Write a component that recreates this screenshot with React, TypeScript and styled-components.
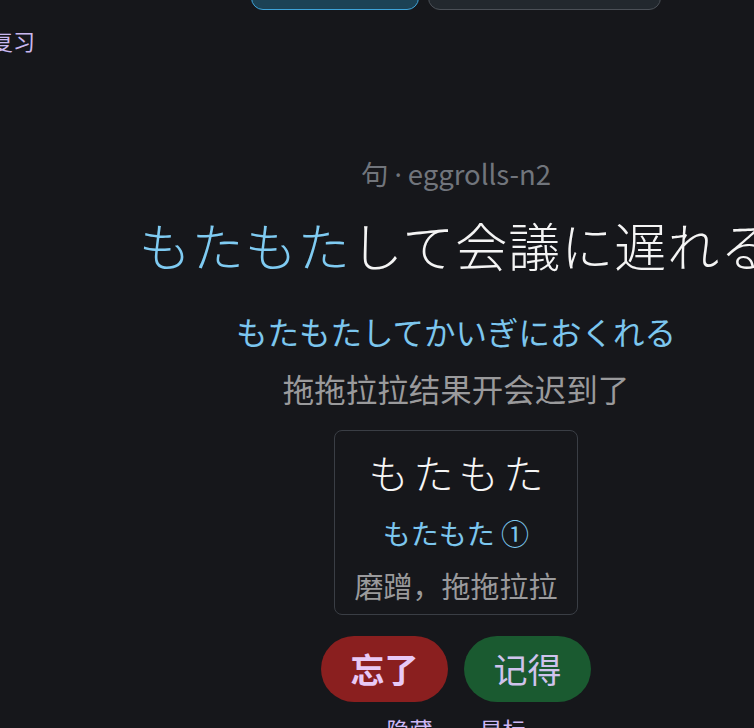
import React from "react";
import styled, { createGlobalStyle } from "styled-components";

const GlobalStyle = createGlobalStyle`
  html, body {
    margin: 0;
    padding: 0;
    background: #16171b;
    overflow: hidden;
  }
  body {
    font-family: "Noto Sans CJK SC", "Noto Sans", sans-serif;
    color: #e8e8ea;
  }
`;

const Page = styled.div`
  width: 930px;
  margin-left: -9px;
  margin-top: -30px;
  display: flex;
  flex-direction: column;
`;

const TabRow = styled.div`
  display: flex;
  justify-content: center;
  gap: 9px;
`;

const Tab = styled.button<{ $active?: boolean; $w: number }>`
  width: ${(p) => p.$w}px;
  height: 40px;
  border-radius: 12px;
  border: 1.5px solid ${(p) => (p.$active ? "#3ea3d8" : "#4b5057")};
  background: ${(p) => (p.$active ? "#1c4255" : "#22282e")};
  padding: 0;
`;

const Title = styled.h1`
  margin: 16px 0 0;
  font-size: 22px;
  line-height: 28px;
  font-weight: 400;
  color: #cab8f0;
`;

const Study = styled.section`
  margin-top: 101px;
  display: flex;
  flex-direction: column;
  align-items: center;
`;

const Meta = styled.div`
  font-size: 27.5px;
  line-height: 36px;
  color: #71757c;
`;

const Dot = styled.span`
  font-family: "Noto Sans", sans-serif;
  margin: 0 6px;
`;

const Sentence = styled.div`
  margin-top: 20px;
  font-family: "Noto Sans CJK JP", sans-serif;
  font-weight: 300;
  font-size: 52px;
  line-height: 64px;
  letter-spacing: 1px;
  white-space: nowrap;
  color: #f4f4f4;
`;

const Target = styled.span`
  color: #7fcbf2;
`;

const Reading = styled.div`
  margin-top: 34px;
  font-family: "Noto Sans CJK JP", sans-serif;
  font-size: 31.5px;
  line-height: 40px;
  color: #7cc6ee;
`;

const Translation = styled.div`
  margin-top: 17px;
  font-size: 31.5px;
  line-height: 40px;
  color: #9a9a9c;
`;

const Card = styled.div`
  margin-top: 22px;
  padding: 17px 19px 11px;
  border: 1px solid #3a3e45;
  border-radius: 8px;
  display: flex;
  flex-direction: column;
  align-items: center;
`;

const Word = styled.div`
  font-family: "Noto Sans CJK JP", sans-serif;
  font-weight: 300;
  font-size: 40px;
  line-height: 48px;
  letter-spacing: 5px;
  margin-right: -5px;
  color: #f6f6f6;
`;

const WordReading = styled.div`
  margin-top: 19px;
  font-family: "Noto Sans CJK JP", sans-serif;
  font-size: 28px;
  line-height: 36px;
  color: #7cc6ee;
`;

const Meaning = styled.div`
  margin-top: 16px;
  font-size: 29px;
  line-height: 36px;
  color: #9a9a9c;
`;

const Actions = styled.div`
  margin-top: 21px;
  display: flex;
  gap: 16px;
`;

const Answer = styled.button<{ $tone: "forgot" | "remember" }>`
  width: 127px;
  height: 66px;
  border: none;
  border-radius: 33px;
  font-family: "Noto Sans CJK SC", sans-serif;
  font-size: 34px;
  line-height: 1;
  cursor: pointer;
  background: ${(p) => (p.$tone === "forgot" ? "#8a1f1f" : "#1a5a30")};
  color: ${(p) => (p.$tone === "forgot" ? "#e8c9f6" : "#cfc3ec")};
  font-weight: ${(p) => (p.$tone === "forgot" ? 700 : 400)};
`;

const Links = styled.div`
  margin-top: 12px;
  display: flex;
  gap: 47px;
`;

const TextLink = styled.a`
  font-size: 23px;
  line-height: 30px;
  color: #cdb8f5;
  text-decoration: none;
  cursor: pointer;
`;

export default function App() {
  return (
    <>
      <GlobalStyle />
      <Page>
        <TabRow>
          <Tab $active $w={168} />
          <Tab $w={233} />
        </TabRow>

        <Title>复习</Title>

        <Study>
          <Meta>
            句<Dot>·</Dot>eggrolls-n2
          </Meta>
          <Sentence>
            <Target>もたもた</Target>して会議に遅れる
          </Sentence>
          <Reading>もたもたしてかいぎにおくれる</Reading>
          <Translation>拖拖拉拉结果开会迟到了</Translation>

          <Card>
            <Word>もたもた</Word>
            <WordReading>もたもた ①</WordReading>
            <Meaning>磨蹭，拖拖拉拉</Meaning>
          </Card>

          <Actions>
            <Answer $tone="forgot">忘了</Answer>
            <Answer $tone="remember">记得</Answer>
          </Actions>

          <Links>
            <TextLink>隐藏</TextLink>
            <TextLink>星标</TextLink>
          </Links>
        </Study>
      </Page>
    </>
  );
}
